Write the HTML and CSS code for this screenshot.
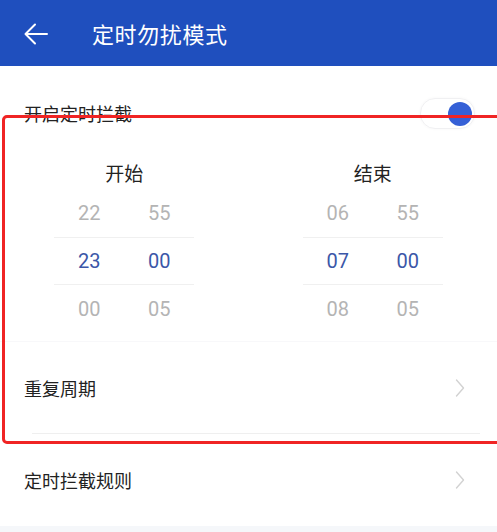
FILE: index.html
```html
<!DOCTYPE HTML>
<html>
<head>
  <meta charset="UTF-8">
  <title>定时勿扰模式</title>
  <link rel="stylesheet" href="styles.css">
</head>
<body>
  <div id="page">
    <!--顶部标题栏-->
    <div class="header">
      <svg class="back" width="24" height="22" viewBox="0 0 24 22">
        <path d="M23 11H2M11 1.5L1.5 11L11 20.5" fill="none" stroke="#fff" stroke-width="2" stroke-linecap="round" stroke-linejoin="round"/>
      </svg>
      <div class="title">定时勿扰模式</div>
    </div>

    <!--开关-->
    <div class="row switch-row">
      <span class="label">开启定时拦截</span>
      <div class="switch"><i class="knob"></i></div>
    </div>

    <!--时间选择-->
    <div class="pickers">
      <div class="picker">
        <div class="picker-title">开始</div>
        <div class="wheel">
          <span>22</span><span>55</span>
          <span class="cur">23</span><span class="cur">00</span>
          <span>00</span><span>05</span>
        </div>
      </div>
      <div class="picker">
        <div class="picker-title">结束</div>
        <div class="wheel">
          <span>06</span><span>55</span>
          <span class="cur">07</span><span class="cur">00</span>
          <span>08</span><span>05</span>
        </div>
      </div>
    </div>

    <div class="row link-row repeat">
      <span class="label">重复周期</span>
      <svg class="chevron" width="10" height="18" viewBox="0 0 10 18"><path d="M1.5 1L8.5 9L1.5 17" fill="none" stroke="#d2d2d2" stroke-width="1.4" stroke-linecap="round" stroke-linejoin="round"/></svg>
    </div>
    <div class="row link-row rule">
      <span class="label">定时拦截规则</span>
      <svg class="chevron" width="10" height="18" viewBox="0 0 10 18"><path d="M1.5 1L8.5 9L1.5 17" fill="none" stroke="#d2d2d2" stroke-width="1.4" stroke-linecap="round" stroke-linejoin="round"/></svg>
    </div>

    <!--红框标注-->
    <div class="mark"></div>
  </div>
</body>
</html>
```

FILE: styles.css
```css
body{margin:0;font-family:Roboto,"Noto Sans CJK SC",sans-serif;background:#f5f7fa;}
#page{
  position: relative;
  width: 497px;
  background: #fff;
}
.header{
  display: flex;
  align-items: center;
  height: 66px;
  padding-left: 24px;
  background-color: #1f4fbe;
  color: #fff;
}
.back{
  display: block;
  margin-top: 1px;
}
.title{
  margin-left: 44px;
  font-size: 22px;
  letter-spacing: .6px;
}
.row{
  position: relative;
  display: flex;
  align-items: center;
  justify-content: space-between;
  padding: 0 24px;
}
.label{
  font-size: 18px;
  color: #222;
}
.switch-row{
  height: 94px;
  padding-right: 22px;
}
.switch{
  position: relative;
  width: 53px;
  height: 29px;
  border: 1px solid #f0f0f2;
  border-radius: 15px;
  box-shadow: 0 0 3px rgba(0,0,0,.04);
}
.knob{
  position: absolute;
  top: 3px;
  right: 2px;
  width: 24px;
  height: 24px;
  border-radius: 50%;
  background: #3560d6;
}
.pickers{
  display: flex;
  padding-bottom: 8px;
  border-bottom: 1px solid #f8f8fa;
}
.picker{
  flex: 1;
  display: flex;
  flex-direction: column;
  align-items: center;
}
.picker-title{
  height: 29px;
  line-height: 29px;
  font-size: 19px;
  color: #222;
}
.wheel{
  display: grid;
  grid-template-columns: 70px 70px;
  grid-auto-rows: 48px;
}
.wheel span{
  display: flex;
  align-items: center;
  justify-content: center;
  font-size: 20px;
  color: #b4b4b4;
}
.wheel span.cur{
  color: #3b57a8;
  border-top: 1px solid #f0f0f0;
  border-bottom: 1px solid #f0f0f0;
}
.link-row{
  height: 92px;
  padding-right: 32px;
}
.repeat::after{
  content: "";
  position: absolute;
  left: 32px;
  right: 17px;
  bottom: 0;
  border-bottom: 1px solid #efefef;
}
.chevron{
  display: block;
}
.mark{
  position: absolute;
  top: 115px;
  left: 2px;
  width: 510px;
  height: 323px;
  border: 3px solid #f02424;
  border-radius: 5px;
}
```
